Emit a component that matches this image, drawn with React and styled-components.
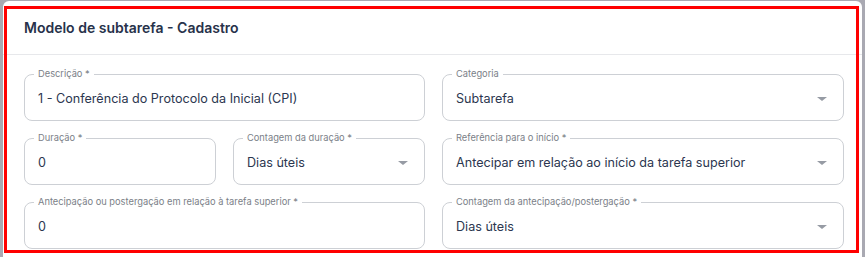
import React from "react";
import styled, { createGlobalStyle } from "styled-components";

const GlobalStyle = createGlobalStyle`
  html, body {
    margin: 0;
    padding: 0;
    background: #a9a9b2;
    font-family: Inter, "Noto Sans", sans-serif;
  }
  * {
    box-sizing: border-box;
  }
`;

const StPage = styled.div`
  position: relative;
  width: 865px;
  height: 257px;
  padding: 1px 3px 0 3px;
  overflow: hidden;
`;

const StCard = styled.section`
  background: #ffffff;
  border-radius: 6px;
  height: 270px;
`;

const StCardHeader = styled.header`
  height: 54px;
  padding: 0 21px;
  display: flex;
  align-items: center;
  border-bottom: 1px solid #e7e8eb;
`;

const StTitle = styled.h2`
  margin: 0;
  font-size: 14px;
  font-weight: 600;
  color: #27324a;
`;

const StForm = styled.form`
  padding: 19px 18px 0 21px;
  display: grid;
  grid-template-columns: 192px 192px 1fr;
  column-gap: 17px;
  row-gap: 17px;
`;

const StField = styled.div`
  position: relative;
  grid-column: span ${({ span }) => span || 1};
  height: 47px;
  border: 1px solid #cdd0d5;
  border-radius: 8px;
  padding: 0 16px 0 13px;
  display: flex;
  align-items: center;
  justify-content: space-between;
`;

const StLabel = styled.label`
  position: absolute;
  top: -7px;
  left: 9px;
  padding: 0 4px;
  background: #ffffff;
  font-size: 9.3px;
  line-height: 12px;
  color: #7b7f88;
  white-space: nowrap;
`;

const StValue = styled.span`
  font-size: 12.6px;
  color: #2c3750;
  padding-top: 1px;
`;

const StArrow = styled.span`
  width: 0;
  height: 0;
  border-left: 5px solid transparent;
  border-right: 5px solid transparent;
  border-top: 4px solid #969ba4;
  margin-top: 2px;
`;

// red annotation frame drawn over the card
const StHighlight = styled.div`
  position: absolute;
  left: 4px;
  top: 6px;
  width: 855px;
  height: 247px;
  border: 3px solid #ff0000;
  pointer-events: none;
`;

const fields = [
  { label: "Descrição *", value: "1 - Conferência do Protocolo da Inicial (CPI)", span: 2 },
  { label: "Categoria", value: "Subtarefa", select: true },
  { label: "Duração *", value: "0" },
  { label: "Contagem da duração *", value: "Dias úteis", select: true },
  {
    label: "Referência para o início *",
    value: "Antecipar em relação ao início da tarefa superior",
    select: true,
  },
  {
    label: "Antecipação ou postergação em relação à tarefa superior *",
    value: "0",
    span: 2,
  },
  { label: "Contagem da antecipação/postergação *", value: "Dias úteis", select: true },
];

const App = () => {
  return (
    <>
      <GlobalStyle />
      <StPage>
        <StCard>
          <StCardHeader>
            <StTitle>Modelo de subtarefa - Cadastro</StTitle>
          </StCardHeader>
          <StForm>
            {fields.map((f) => (
              <StField key={f.label} span={f.span}>
                <StLabel>{f.label}</StLabel>
                <StValue>{f.value}</StValue>
                {f.select && <StArrow />}
              </StField>
            ))}
          </StForm>
        </StCard>
        <StHighlight />
      </StPage>
    </>
  );
};

export default App;
